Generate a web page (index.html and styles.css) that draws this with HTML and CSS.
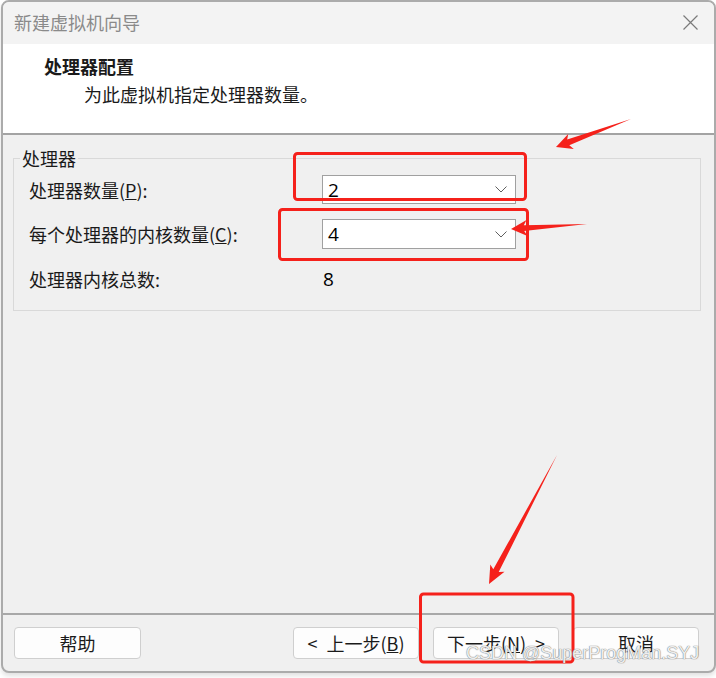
FILE: index.html
```html
<!DOCTYPE html>
<html lang="zh-CN">
<head>
  <meta charset="UTF-8">
  <title>新建虚拟机向导</title>
  <link rel="stylesheet" href="styles.css">
</head>
<body>
  <div class="window">
    <div class="titlebar">
      <span class="title">新建虚拟机向导</span>
      <svg class="close" width="15" height="15" viewBox="0 0 15 15">
        <path d="M0.5 0.5 L14.5 14.5 M14.5 0.5 L0.5 14.5" stroke="#7a7a7a" stroke-width="1.2" fill="none"/>
      </svg>
    </div>

    <div class="header">
      <div class="heading">处理器配置</div>
      <div class="subtitle">为此虚拟机指定处理器数量。</div>
    </div>

    <div class="main">
      <fieldset class="group">
        <legend>处理器</legend>
        <div class="rows">
          <label>处理器数量(<u>P</u>):</label>
          <div class="select">
            <span class="value">2</span>
            <svg width="12" height="7" viewBox="0 0 12 7"><path d="M0.5 0.5 L6 6 L11.5 0.5" stroke="#5f5f5f" stroke-width="1" fill="none"/></svg>
          </div>

          <label>每个处理器的内核数量(<u>C</u>):</label>
          <div class="select">
            <span class="value">4</span>
            <svg width="12" height="7" viewBox="0 0 12 7"><path d="M0.5 0.5 L6 6 L11.5 0.5" stroke="#5f5f5f" stroke-width="1" fill="none"/></svg>
          </div>

          <label>处理器内核总数:</label>
          <span class="value total">8</span>
        </div>
      </fieldset>
    </div>

    <div class="footer">
      <button>帮助</button>
      <div class="spacer"></div>
      <button>&lt;&ensp;上一步(<u>B</u>)</button>
      <button>下一步(<u>N</u>)&ensp;&gt;</button>
      <button>取消</button>
    </div>
  </div>

  <!-- red annotations drawn on top of the screenshot -->
  <svg class="marks" width="716" height="678" viewBox="0 0 716 678">
    <g fill="none" stroke="#f5211b" stroke-width="3">
      <rect x="294.5" y="153.5" width="231" height="46" rx="3"/>
      <rect x="279.5" y="209.5" width="248" height="50" rx="3"/>
      <rect x="420.5" y="594" width="152.5" height="68" rx="3"/>
    </g>
    <g fill="#f5211b">
      <polygon points="631,119 567.2,139.6 568.2,133.9 556,147 573.8,148.9 569.3,145.3"/>
      <polygon points="587,224 523.8,225.2 526.5,220 511,229 527.5,235.9 524.2,231.1"/>
      <polygon points="557,455 493.3,569.3 490.3,564.4 489,584 504.5,571.8 498.7,572.1"/>
    </g>
  </svg>
  <div class="watermark">CSDN @SuperProgMan.SYJ</div>
</body>
</html>
```

FILE: styles.css
```css
* { box-sizing: border-box; }
body {
  margin: 0;
  background: #fff;
  font-family: "Noto Sans CJK SC", "Noto Sans", sans-serif;
  font-size: 18px;
  color: #1a1a1a;
  position: relative;
  width: 716px;
  height: 678px;
  overflow: hidden;
}
.window {
  margin-left: 1px;
  width: 715px;
  height: 673px;
  border: 2px solid #ababab;
  border-radius: 8px;
  overflow: hidden;
  display: flex;
  flex-direction: column;
  background: #f0f0f0;
  box-shadow: 0 3px 5px rgba(0, 0, 0, 0.12);
}
.titlebar {
  height: 42px;
  background: #f3f3f3;
  display: flex;
  align-items: center;
  justify-content: space-between;
  padding: 0 16px 2px 11px;
}
.title {
  color: #8a8a8a;
  line-height: 24px;
}
.header {
  height: 91px;
  background: #fff;
  border-bottom: 2px solid #a3a3a3;
  padding: 10px 0 0 41px;
  line-height: 24px;
}
.heading {
  font-weight: 700;
}
.subtitle {
  margin-top: 4px;
  padding-left: 40px;
}
.main {
  flex: 1;
  padding: 11px 13px 0 10px;
}
.group {
  margin: 0;
  padding: 0;
  border: 1px solid #d9d9d9;
}
.group legend {
  margin-left: 6px;
  padding: 0 2px;
  line-height: 24px;
}
.rows {
  display: grid;
  grid-template-columns: 293px 194px;
  grid-template-rows: 29px 30px 30px;
  row-gap: 15px;
  align-items: center;
  padding: 5px 15px 16px 15px;
}
.rows label {
  line-height: 24px;
}
.select {
  height: 100%;
  background: #fff;
  border: 1px solid #a0a0a0;
  display: flex;
  align-items: center;
  justify-content: space-between;
  padding: 0 8px 0 5px;
}
.value {
  font-family: "Open Sans", "Noto Sans", sans-serif;
  font-size: 19px;
  color: #000;
  line-height: 24px;
}
.total {
  padding-left: 1px;
}
.footer {
  height: 58px;
  border-top: 2px solid #a8a8a8;
  display: flex;
  align-items: flex-start;
  gap: 14px;
  padding: 12px 15px 0 11px;
}
.spacer { flex: 1; }
button {
  width: 126px;
  height: 32px;
  background: #fdfdfd;
  border: 1px solid #cfcfcf;
  border-radius: 4px;
  font-family: "Noto Sans CJK SC", "Noto Sans", sans-serif;
  font-size: 18px;
  color: #1a1a1a;
  padding: 0;
  line-height: 28px;
}
.footer button:first-child {
  width: 127px;
}
.marks {
  position: absolute;
  left: 0;
  top: 0;
  pointer-events: none;
}
.watermark {
  position: absolute;
  left: 466px;
  top: 641px;
  font-family: "Liberation Sans", Arial, sans-serif;
  font-size: 18px;
  line-height: 24px;
  color: rgba(255, 255, 255, 0.9);
  text-shadow: 0 0 1px #7a7a7a, 0 0 1px #7a7a7a;
}
```
